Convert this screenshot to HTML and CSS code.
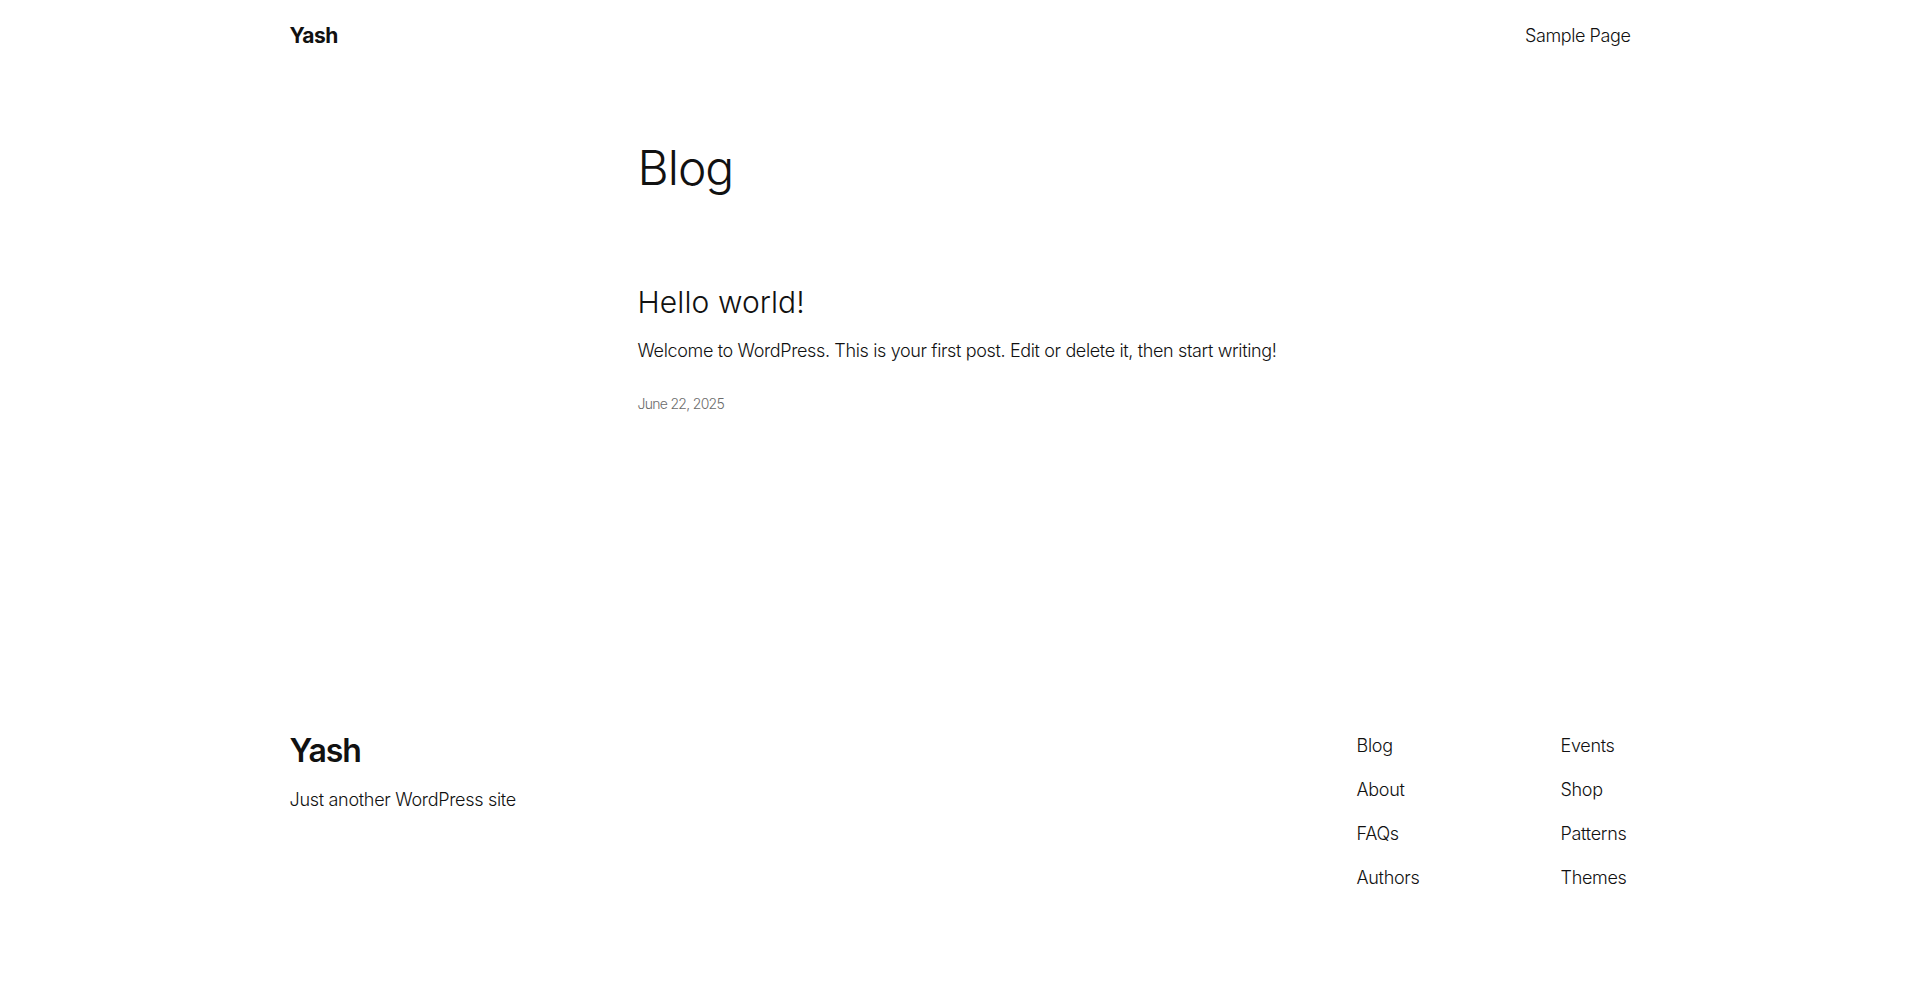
FILE: index.html
```html
<!DOCTYPE html>
<html lang="en">
<head>
<meta charset="utf-8">
<title>Yash</title>
<link rel="stylesheet" href="styles.css">
</head>
<body>
<div class="page">
  <header class="site-header">
    <a class="site-title" href="#">Yash</a>
    <nav class="header-nav"><a href="#">Sample Page</a></nav>
  </header>
  <main class="site-main">
    <h1 class="page-title">Blog</h1>
    <article class="post">
      <h2 class="post-title"><a href="#">Hello world!</a></h2>
      <p class="post-excerpt">Welcome to WordPress. This is your first post. Edit or delete it, then start writing!</p>
      <div class="post-date">June 22, 2025</div>
    </article>
  </main>
  <footer class="site-footer">
    <div class="footer-brand">
      <div class="footer-title">Yash</div>
      <p class="tagline">Just another WordPress site</p>
    </div>
    <div class="footer-navs">
      <ul class="footer-col">
        <li><a href="#">Blog</a></li>
        <li><a href="#">About</a></li>
        <li><a href="#">FAQs</a></li>
        <li><a href="#">Authors</a></li>
      </ul>
      <ul class="footer-col">
        <li><a href="#">Events</a></li>
        <li><a href="#">Shop</a></li>
        <li><a href="#">Patterns</a></li>
        <li><a href="#">Themes</a></li>
      </ul>
    </div>
  </footer>
</div>
</body>
</html>
```

FILE: styles.css
```css
* { box-sizing: border-box; }
html, body { margin: 0; padding: 0; background: #fff; }
body {
  font-family: "Inter", "Liberation Sans", sans-serif;
  font-weight: 300;
  color: #111111;
  font-size: 18px;
  line-height: 1.5;
  letter-spacing: -0.3px;
}
a { color: inherit; text-decoration: none; }
.page { min-height: 993px; display: flex; flex-direction: column; }
.site-header {
  width: 1341px;
  margin: 0 auto;
  padding: 22px 0 20px;
  display: flex;
  justify-content: space-between;
  align-items: center;
}
.site-title { font-size: 21px; font-weight: 700; line-height: 28px; letter-spacing: -0.5px; }
.header-nav a { font-size: 18px; line-height: 28px; letter-spacing: -0.4px; }
.site-main { width: 645px; margin: 0 auto; padding-top: 71px; flex: 1; }
.page-title { margin: 0; font-size: 48px; font-weight: 300; line-height: 54px; letter-spacing: -1px; }
.post { margin-top: 89px; }
.post-title { margin: 0; font-size: 30px; font-weight: 300; line-height: 36px; letter-spacing: 0.1px; }
.post-excerpt { margin: 17px 0 0; line-height: 27px; letter-spacing: -0.36px; }
.post-date { margin-top: 30px; font-size: 14px; line-height: 20px; color: #6b6b6b; letter-spacing: -0.7px; }
.site-footer {
  width: 1341px;
  margin: 0 auto;
  padding: 0 0 102px;
  display: flex;
  justify-content: space-between;
  align-items: flex-start;
}
.footer-title { font-size: 32px; font-weight: 600; line-height: 38px; letter-spacing: -1px; }
.tagline { margin: 16px 0 0; line-height: 27px; }
.footer-navs { display: grid; grid-template-columns: 204px 70px; }
.footer-col { list-style: none; margin: 0; padding: 0; display: flex; flex-direction: column; gap: 17px; }
.footer-col li { line-height: 27px; }
```
